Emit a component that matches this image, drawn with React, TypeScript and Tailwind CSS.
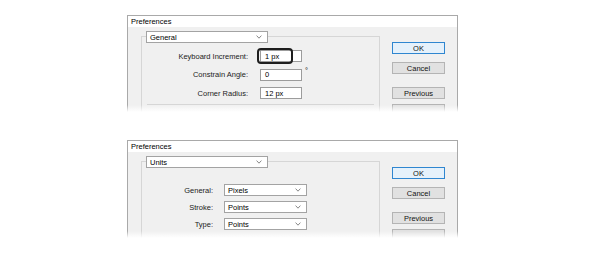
import React from "react";

const Chevron = () => (
  <svg width="6" height="4" viewBox="0 0 6 4" className="shrink-0">
    <path d="M0.6 0.6 L3 3.2 L5.4 0.6" fill="none" stroke="#7a7a7a" strokeWidth="0.9" />
  </svg>
);

function Select({ value, className }: { value: string; className: string }) {
  return (
    <div className={`h-[12px] bg-white border border-[#a3a3a3] flex items-center justify-between pl-[3px] pr-[5px] ${className}`}>
      <span className="leading-none">{value}</span>
      <Chevron />
    </div>
  );
}

function Btn({ label, primary, className = "" }: { label: string; primary?: boolean; className?: string }) {
  return (
    <div
      className={`h-[12px] flex items-center justify-center border leading-none ${
        primary ? "bg-[#e5f1fb] border-[#2f86d0]" : "bg-[#e1e1e1] border-[#b4b4b4]"
      } ${className}`}
    >
      {label}
    </div>
  );
}

function Dialog({
  legend,
  children,
  height,
}: {
  legend: string;
  children: React.ReactNode;
  height: string;
}) {
  return (
    <div className={`relative w-[331px] ${height} overflow-hidden`}>
      <div className="h-full border border-b-0 border-[#a9a9a9] flex flex-col">
        <div className="h-[15px] bg-white flex items-center pl-[3px] text-black">Preferences</div>
        <div className="flex-1 bg-[#f0f0f0] flex pl-[13px] pt-[4px]">
          <div className="w-[239px] flex flex-col">
            <div className="mt-[5px] border border-b-0 border-[#d6d6d6] flex-1 flex flex-col">
              <Select value={legend} className="-mt-[6px] ml-[4px] w-[122px]" />
              {children}
            </div>
          </div>
          <div className="ml-[12px] w-[53px] flex flex-col pt-[11px] text-[#111]">
            <Btn label="OK" primary />
            <Btn label="Cancel" className="mt-[8px]" />
            <Btn label="Previous" className="mt-[13px]" />
            <Btn label="" className="mt-[5px]" />
          </div>
        </div>
      </div>
      <div className="absolute left-0 right-0 bottom-0 h-[7px] bg-linear-to-b from-transparent to-white" />
    </div>
  );
}

function InputRow({ label, value, children }: { label: string; value: string; children?: React.ReactNode }) {
  return (
    <div className="flex items-center h-[12px]">
      <div className="w-[106px] text-right text-[#222] leading-none">{label}</div>
      <div className="relative ml-[12px] w-[42px] h-[12px] bg-white border border-[#9c9c9c] flex items-center pl-[4px] leading-none">
        {value}
        {children}
      </div>
    </div>
  );
}

function SelectRow({ label, value }: { label: string; value: string }) {
  return (
    <div className="flex items-center h-[12px]">
      <div className="w-[71px] text-right text-[#222] leading-none">{label}</div>
      <Select value={value} className="ml-[11px] w-[83px]" />
    </div>
  );
}

export default function App() {
  return (
    <div
      className="w-[596px] h-[276px] bg-white pt-[15px] pl-[127px] flex flex-col gap-[28px] text-[7.5px] text-black"
      style={{ fontFamily: '"Liberation Sans", Arial, sans-serif' }}
    >
      <Dialog legend="General" height="h-[97px]">
        <div className="mt-[7px] flex flex-col gap-[6.5px]">
          <InputRow label="Keyboard Increment:" value="1 px">
            <div className="absolute -left-[4px] -top-[3px] w-[36px] h-[16px] border-[2.5px] border-[#1e1e1e] rounded-[4px]" />
          </InputRow>
          <div className="relative">
            <InputRow label="Constrain Angle:" value="0" />
            <span className="absolute left-[163px] -top-[2px] leading-none">°</span>
          </div>
          <InputRow label="Corner Radius:" value="12 px" />
        </div>
        <div className="mt-[5px] mx-[5px] border-t border-[#d6d6d6]" />
      </Dialog>
      <Dialog legend="Units" height="h-[98px]">
        <div className="mt-[16px] flex flex-col gap-[5px]">
          <SelectRow label="General:" value="Pixels" />
          <SelectRow label="Stroke:" value="Points" />
          <SelectRow label="Type:" value="Points" />
        </div>
      </Dialog>
    </div>
  );
}
